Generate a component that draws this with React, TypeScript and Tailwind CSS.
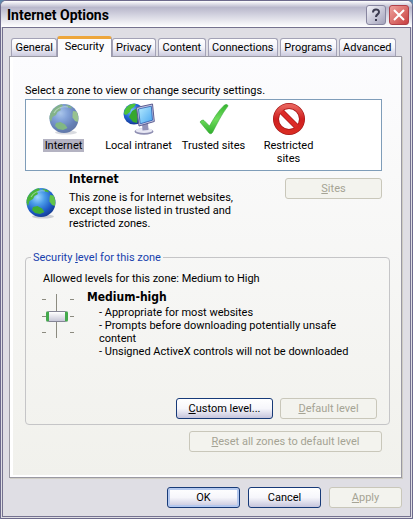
import React, { useState } from 'react';

const tabs = ['General', 'Security', 'Privacy', 'Content', 'Connections', 'Programs', 'Advanced'];

const GlobeIcon = ({ faded = false }: { faded?: boolean }) => (
  <svg viewBox="0 0 32 32" className={`h-8 w-8 shrink-0 ${faded ? 'opacity-75' : ''}`} aria-hidden="true">
    <defs>
      <radialGradient id={faded ? 'seaFaded' : 'sea'} cx="0.38" cy="0.32" r="0.72">
        <stop offset="0" stopColor={faded ? '#8fb4e4' : '#9fd8ff'} />
        <stop offset="0.35" stopColor={faded ? '#5a84cc' : '#4a9be8'} />
        <stop offset="0.75" stopColor={faded ? '#33579f' : '#1c58c4'} />
        <stop offset="1" stopColor={faded ? '#2c4a88' : '#143a90'} />
      </radialGradient>
    </defs>
    <ellipse cx="18" cy="29.5" rx="11" ry="2" fill="#b8bcc4" opacity="0.7" />
    <circle cx="16" cy="15.500" r="14.500" fill={`url(#${faded ? 'seaFaded' : 'sea'})`} />
    <path d="M4.500 7C7.500 3.500 11 1.800 14 1.300L15 3L12 5L13 7L9.500 9L8 12L4.500 14L3 19L1.600 16C1.300 12 2.500 9.500 4.500 7Z" fill={faded ? '#5c9a62' : '#48b43a'} />
    <path d="M17 1.500L23 3.200L24 5.500L20 4.500Z" fill={faded ? '#5c9a62' : '#48b43a'} />
    <path d="M25 8L28.500 8.500C30.300 12 30.800 15 29.800 19L27 18L24.500 14.500L24.500 11Z" fill={faded ? '#76ae6a' : '#62c44a'} />
    <path d="M8 20L12.500 19L17 21.500L19.500 25L15 27L10 26L7 23Z" fill={faded ? '#58a05a' : '#3fae35'} />
    <path d="M6 10C9 5 14 3 20 4" stroke="#d6f3e0" strokeWidth="1.200" fill="none" opacity="0.5" />
  </svg>
);

const IntranetIcon = () => (
  <svg viewBox="0 0 32 32" className="h-8 w-8" aria-hidden="true">
    <defs>
      <radialGradient id="netSea" cx="0.4" cy="0.35" r="0.7">
        <stop offset="0" stopColor="#7cc4ff" />
        <stop offset="0.5" stopColor="#2468d8" />
        <stop offset="1" stopColor="#12308c" />
      </radialGradient>
      <linearGradient id="screen" x1="0" y1="0" x2="1" y2="1">
        <stop offset="0" stopColor="#b8ecff" />
        <stop offset="1" stopColor="#48a6f0" />
      </linearGradient>
    </defs>
    <circle cx="11" cy="11" r="10.500" fill="url(#netSea)" />
    <path d="M3 5C6 1 10 0.500 13 1L11 4L8 6L7 9L3 12L1 11C1 8 2 6 3 5Z" fill="#4cc23a" />
    <path d="M9 8L14 5L15 13L14 20L10 19L6 14Z" fill="#36a72e" />
    <ellipse cx="21" cy="28.500" rx="9.500" ry="3.200" fill="#8f8fb2" />
    <ellipse cx="21" cy="27.500" rx="8.500" ry="2.600" fill="#e8e8f4" />
    <path d="M19 20L25 20L25.500 27L19.500 27.500Z" fill="#9292b8" />
    <path d="M13.500 4.500L29.500 1L31.300 18.500L16 23Z" fill="#c9c9e4" stroke="#5c5c90" strokeWidth="1" />
    <path d="M15.500 6L28.300 3.200L29.500 17.200L17.200 20.800Z" fill="url(#screen)" stroke="#2c5cae" strokeWidth="0.800" />
  </svg>
);

const CheckIcon = () => (
  <svg viewBox="0 0 32 32" className="h-8 w-8" aria-hidden="true">
    <defs>
      <linearGradient id="tick" x1="0" y1="0" x2="0" y2="1">
        <stop offset="0" stopColor="#35b52f" />
        <stop offset="0.500" stopColor="#6fdc5c" />
        <stop offset="1" stopColor="#2fae2c" />
      </linearGradient>
    </defs>
    <path d="M2 19C3 17.500 5 16.500 6 17.500L11.500 23C16 15 20 8 26.500 2C28 1 30 1.500 30 3C23 12 19 21 14.500 29.500C13.500 31 12 31 11 30Z" fill="url(#tick)" stroke="#38a838" strokeWidth="0.600" />
  </svg>
);

const RestrictedIcon = () => (
  <svg viewBox="0 0 32 32" className="h-8 w-8" aria-hidden="true">
    <defs>
      <linearGradient id="ban" x1="0" y1="0" x2="0" y2="1">
        <stop offset="0" stopColor="#e8615a" />
        <stop offset="0.500" stopColor="#cf1f1f" />
        <stop offset="1" stopColor="#d92b22" />
      </linearGradient>
    </defs>
    <circle cx="16" cy="16" r="13" fill="#ffffff" stroke="#a61616" strokeWidth="6" />
    <path d="M7 7L25 25" stroke="#a61616" strokeWidth="5.600" />
    <path d="M7 7L25 25" stroke="#dc2a26" strokeWidth="4.400" />
    <circle cx="16" cy="16" r="13" fill="none" stroke="url(#ban)" strokeWidth="4.600" />
  </svg>
);

const zones = [
  { name: 'Internet', icon: <GlobeIcon faded /> },
  { name: 'Local intranet', icon: <IntranetIcon /> },
  { name: 'Trusted sites', icon: <CheckIcon /> },
  { name: 'Restricted sites', icon: <RestrictedIcon /> },
];

const enabledButton =
  'h-[21px] rounded-[3px] border border-[#173a78] bg-linear-to-b from-white via-[#f6f6fb] to-[#c6c5dc] text-black';
const disabledButton = 'h-[21px] rounded-[3px] border border-[#c9c7ba] bg-[#f3f3ee] text-[#a5a394]';
const heading = "font-['DejaVu_Sans_Condensed',sans-serif] text-[12px] leading-[13px] font-bold";

const App = () => {
  const [activeTab, setActiveTab] = useState('Security');
  const [zone, setZone] = useState('Internet');
  const [level, setLevel] = useState(2);

  return (
    <div className="bg-[#5f88ac] font-[Roboto,sans-serif] text-[11px] leading-[13px] text-black">
      <div className="rounded-t-[6px] border border-[#6d6a8c] bg-[#dfdee4]">
        {/* Title bar */}
        <header className="flex h-[26px] items-center justify-between rounded-t-[5px] bg-linear-to-b from-white via-[#b9b8cc] via-25% to-white pl-[6px] pr-[3px] pt-[2px]">
          <h1 className="text-[14px] font-bold">Internet Options</h1>
          <div className="flex gap-[3px]">
            <button aria-label="Help" className="flex h-5 w-5 items-center justify-center rounded-[3px] border border-[#8886a0] bg-linear-to-br from-[#f4f4fa] to-[#a3a2ba]">
              <svg viewBox="0 0 20 20" className="h-5 w-5 shrink-0" fill="none" stroke="#3c3b50" strokeWidth="2">
                <path d="M7 7.500C7 3.500 13 3.500 13 7C13 9.500 10 9.300 10 12M10 14V16" />
              </svg>
            </button>
            <button aria-label="Close" className="flex h-5 w-5 items-center justify-center rounded-[3px] border border-[#b04048] bg-linear-to-br from-[#eda09c] to-[#c73c40]">
              <svg viewBox="0 0 20 20" className="h-5 w-5 shrink-0" stroke="#ffffff" strokeWidth="2">
                <path d="M5 5L15 15M15 5L5 15" />
              </svg>
            </button>
          </div>
        </header>

        <main className="mx-px mb-px border border-[#75728f] pb-2 pl-[6px] pr-2 pt-2">
          {/* Tabs */}
          <div role="tablist" className="flex h-5 items-end gap-[2px] pl-[2px] pr-[6px]">
            {tabs.map((tab) => (
              <button
                key={tab}
                role="tab"
                aria-selected={tab === activeTab}
                onClick={() => setActiveTab(tab)}
                className={
                  tab === activeTab
                    ? 'relative -mx-[2px] -mb-px h-[21px] flex-auto rounded-t-[3px] border-x border-t-[3px] border-x-[#9b9aae] border-t-[#eda63c] bg-[#fcfcfd] px-[6px] pb-1'
                    : 'h-[18px] flex-auto rounded-t-[3px] border border-b-0 border-[#a3a2b6] bg-linear-to-b from-white via-[#f4f4f9] to-[#cbcade] px-[3px]'
                }
              >
                {tab}
              </button>
            ))}
          </div>

          {/* Security page */}
          <section className="border border-[#9a99a3] bg-linear-to-b from-[#fcfcfe] to-[#f1f1ec] px-[15px] pb-[25px] pt-[27px] shadow-[inset_3px_-2px_0_#ffffff,1px_1px_0_#cfcdc4]">
            <p id="zone-label">Select a zone to view or change security settings.</p>
            <div role="listbox" aria-labelledby="zone-label" className="mr-1 mt-[2px] flex h-[72px] border border-[#7f9db9] bg-white pt-[3px]">
              {zones.map(({ name, icon }) => (
                <button
                  key={name}
                  role="option"
                  aria-selected={zone === name}
                  onClick={() => setZone(name)}
                  className="flex w-[75px] flex-col items-center gap-1"
                >
                  {icon}
                  <span className={zone === name ? 'bg-[#b4b3c2] px-[2px]' : ''}>{name}</span>
                </button>
              ))}
            </div>

            <div className="mt-[2px] flex h-[57px] gap-2">
              <div className="w-9 pt-[14px]">
                <GlobeIcon />
              </div>
              <div className="flex-1">
                <h2 className={heading}>Internet</h2>
                <p className="mt-[5px] max-w-[178px]">
                  This zone is for Internet websites, except those listed in trusted and restricted zones.
                </p>
              </div>
              <button disabled className={`${disabledButton} mr-1 mt-[5px] w-[97px]`}>
                <u>S</u>ites
              </button>
            </div>

            {/* Security level */}
            <fieldset className="-mr-1 mt-[21px] rounded-[4px] border border-[#c5c5c7] px-3 pb-[5px]">
              <legend className="-ml-[7px] px-[2px] text-[#173fad]">
                Security <u>l</u>evel for this zone
              </legend>
              <p className="ml-[5px] mt-2">Allowed levels for this zone: Medium to High</p>
              <div className="mt-[6px] flex h-[107px] gap-[13px]">
                <div className="relative ml-1 mt-[3px] h-11 w-8">
                  <svg viewBox="0 0 32 44" className="h-11 w-8" stroke="#8c8b80" aria-hidden="true">
                    <path d="M14.500 0V44M0 5.500H4M28 5.500H32M0 22.500H4M28 22.500H32M0 38.500H4M28 38.500H32" />
                  </svg>
                  <input
                    type="range"
                    aria-label="Security level for this zone"
                    min={1}
                    max={3}
                    value={level}
                    onChange={(e) => setLevel(Number(e.target.value))}
                    className="absolute left-1 top-0 h-11 w-[22px] appearance-none bg-transparent [direction:rtl] [writing-mode:vertical-lr] [&::-webkit-slider-thumb]:h-[11px] [&::-webkit-slider-thumb]:w-[22px] [&::-webkit-slider-thumb]:appearance-none [&::-webkit-slider-thumb]:rounded-[2px] [&::-webkit-slider-thumb]:border-x [&::-webkit-slider-thumb]:border-y-[3px] [&::-webkit-slider-thumb]:border-x-[#858596] [&::-webkit-slider-thumb]:border-y-[#43a94c] [&::-webkit-slider-thumb]:bg-linear-to-b [&::-webkit-slider-thumb]:from-white [&::-webkit-slider-thumb]:to-[#c8c8d8]"
                  />
                </div>
                <div>
                  <h3 className={heading}>Medium-high</h3>
                  <ul className="ml-3 mt-[2px] max-w-[250px]">
                    <li>- Appropriate for most websites</li>
                    <li>- Prompts before downloading potentially unsafe content</li>
                    <li>- Unsigned ActiveX controls will not be downloaded</li>
                  </ul>
                </div>
              </div>
              <div className="flex justify-end gap-[7px]">
                <button className={`${enabledButton} w-[97px]`}>
                  <u>C</u>ustom level...
                </button>
                <button disabled className={`${disabledButton} w-[97px]`}>
                  <u>D</u>efault level
                </button>
              </div>
            </fieldset>
            <div className="mr-1 mt-[6px] flex justify-end">
              <button disabled className={`${disabledButton} w-[193px]`}>
                <u>R</u>eset all zones to default level
              </button>
            </div>
          </section>

          <footer className="mt-[9px] flex justify-end gap-2">
            <button className={`${enabledButton} w-[73px] shadow-[inset_0_0_0_2px_#b4c8ee]`}>OK</button>
            <button className={`${enabledButton} w-[73px]`}>Cancel</button>
            <button disabled className={`${disabledButton} w-[73px]`}>
              <u>A</u>pply
            </button>
          </footer>
        </main>
      </div>
    </div>
  );
};

export default App;
